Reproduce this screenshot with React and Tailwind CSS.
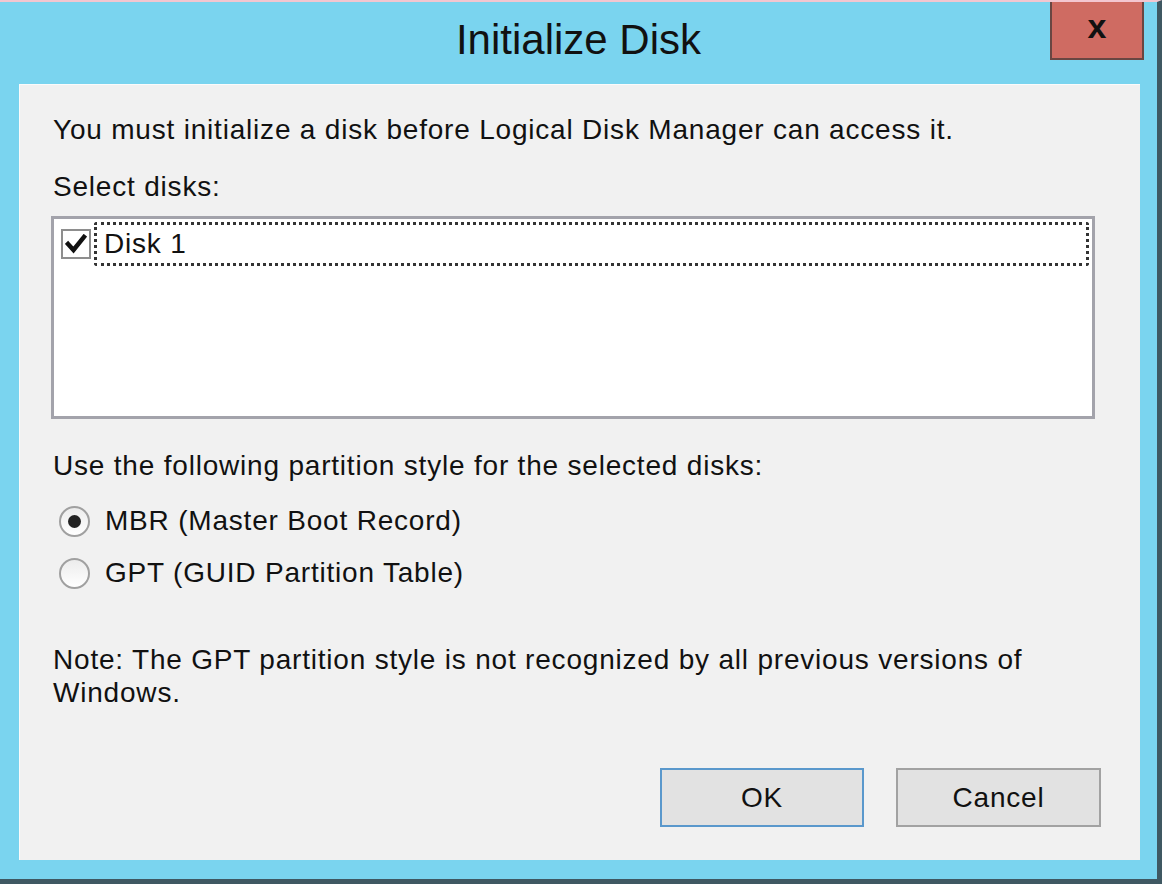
import React, { useState } from 'react';

const font = { fontFamily: '"Liberation Sans", Arial, sans-serif' };

const Radio = ({ checked, label, onClick }) => (
  <button type="button" onClick={onClick} className="flex items-center gap-[15px] ml-[39px] text-left">
    <span className="w-[31px] h-[31px] rounded-full border-2 border-[#a0a0a0] bg-gradient-to-b from-[#ececec] to-[#ffffff] flex items-center justify-center">
      {checked && <span className="w-[13px] h-[13px] rounded-full bg-[#222]" />}
    </span>
    <span className="text-[28px] leading-[34px] tracking-[0.8px]">{label}</span>
  </button>
);

const App = () => {
  const [style, setStyle] = useState('mbr');
  const [checked, setChecked] = useState(true);

  return (
    <div
      className="w-[1162px] h-[884px] bg-[#7ad4ef] border-t-2 border-t-[#f3c6d0] border-r-[5px] border-b-[5px] border-r-[#3f5862] border-b-[#3f5862] flex flex-col text-[#111]"
      style={font}
    >
      {/* Title bar */}
      <div className="h-[82px] grid grid-cols-[1fr_auto_1fr]">
        <div />
        <div className="self-center text-[42px] leading-none pb-[6px]">Initialize Disk</div>
        <div className="flex justify-end items-start pr-[13px]">
          <button className="w-[94px] h-[58px] bg-[#cf6b62] border-2 border-t-0 border-[#6a4642] flex items-center justify-center text-[34px] font-bold leading-none pb-[8px]">
            x
          </button>
        </div>
      </div>

      {/* Dialog body */}
      <div className="ml-[19px] mr-[17px] h-[776px] bg-[#f1f1f1] border-l border-t border-white/70 flex flex-col text-[28px] tracking-[0.8px]">
        <p className="pl-[33px] pt-[28px] leading-[34px]">
          You must initialize a disk before Logical Disk Manager can access it.
        </p>
        <p className="pl-[33px] mt-[23px] leading-[34px]">Select disks:</p>

        <div className="ml-[31px] mt-[12px] w-[1044px] h-[203px] border-[3px] border-[#a3a3ab] bg-white">
          <div className="flex items-center mt-[3px]">
            <button
              type="button"
              onClick={() => setChecked(!checked)}
              className="ml-[7px] w-[30px] h-[30px] border-2 border-[#8e8e8e] bg-white flex items-center justify-center"
            >
              {checked && (
                <svg width="22" height="20" viewBox="0 0 22 20">
                  <path d="M3 10 L8.5 16 L19 3" fill="none" stroke="#111" strokeWidth="4.5" strokeLinecap="square" />
                </svg>
              )}
            </button>
            <div className="ml-[3px] mr-[3px] flex-1 h-[44px] border-[3px] border-dotted border-[#333] rounded-[3px] flex items-center pl-[7px]">
              Disk 1
            </div>
          </div>
        </div>

        <p className="pl-[33px] mt-[30px] leading-[34px]">
          Use the following partition style for the selected disks:
        </p>
        <div className="mt-[21px] flex flex-col gap-[18px]">
          <Radio checked={style === 'mbr'} label="MBR (Master Boot Record)" onClick={() => setStyle('mbr')} />
          <Radio checked={style === 'gpt'} label="GPT (GUID Partition Table)" onClick={() => setStyle('gpt')} />
        </div>

        <p className="pl-[33px] pr-[90px] mt-[53px] leading-[33px]">
          Note: The GPT partition style is not recognized by all previous versions of Windows.
        </p>

        <div className="mt-auto mb-[33px] flex justify-end gap-[32px] pr-[39px]">
          <button className="w-[204px] h-[59px] bg-[#e2e2e2] border-2 border-[#5a98cc]">OK</button>
          <button className="w-[205px] h-[59px] bg-[#e2e2e2] border-2 border-[#a2a2a2]">Cancel</button>
        </div>
      </div>
    </div>
  );
};

export default App;
